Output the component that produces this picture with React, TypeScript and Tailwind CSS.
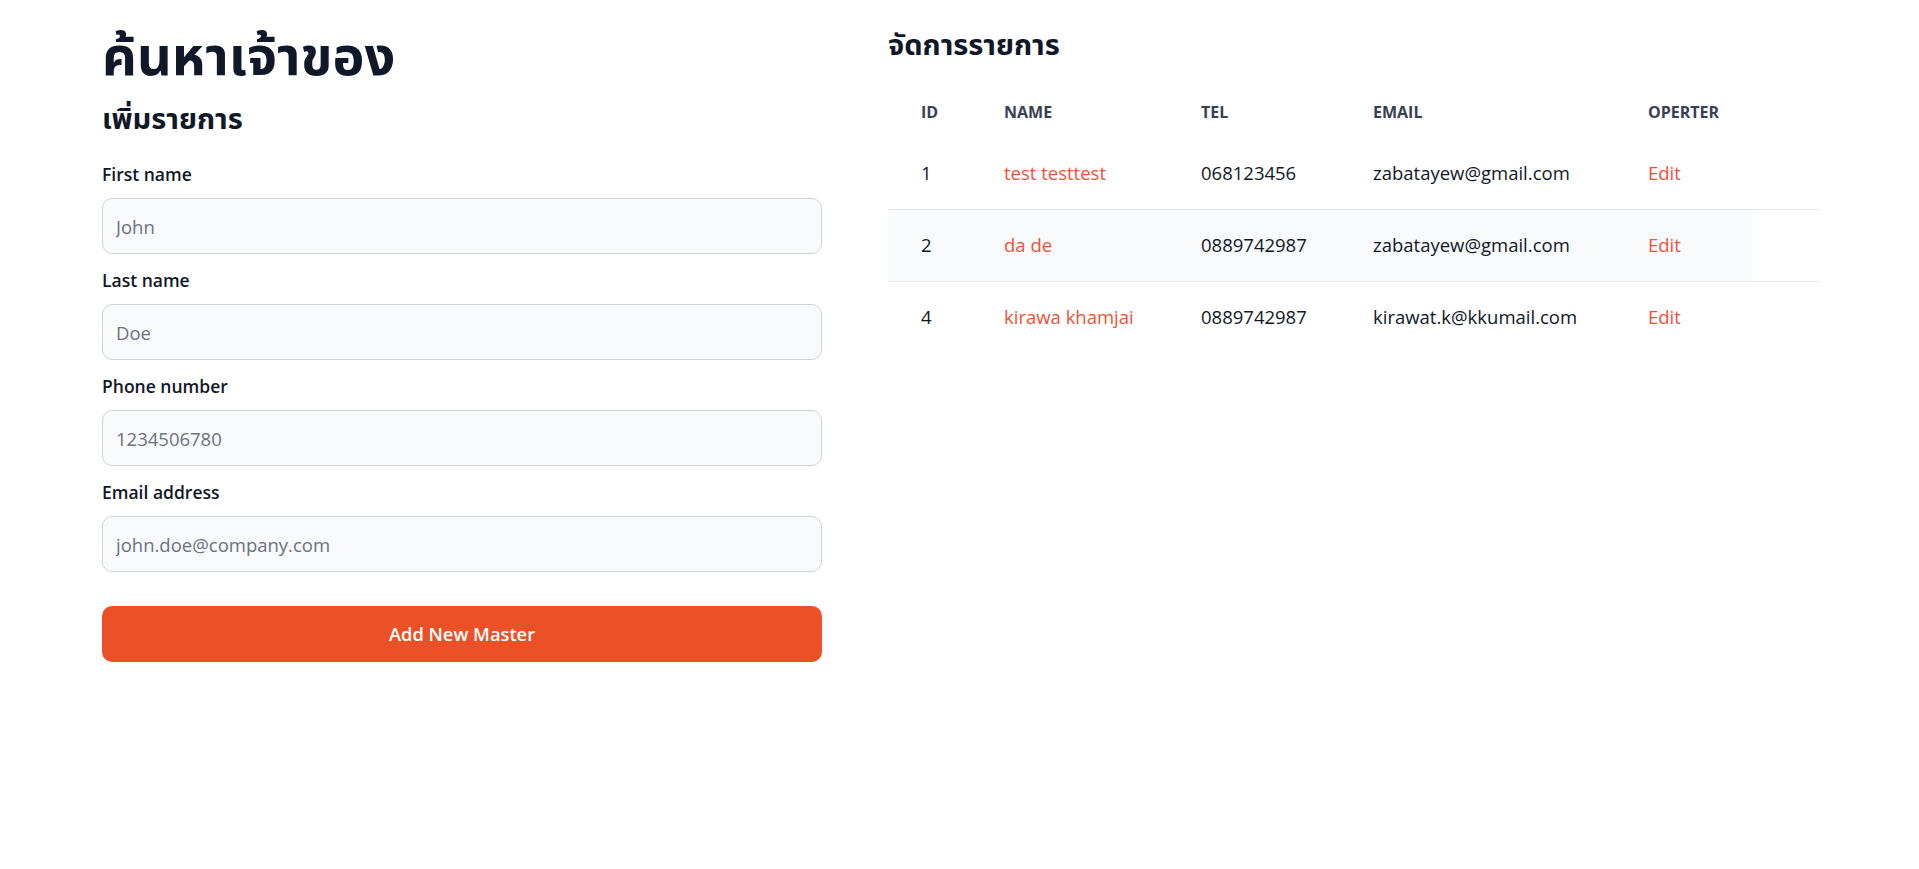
import React from "react";

const rows = [
  { id: "1", name: "test testtest", tel: "068123456", email: "zabatayew@gmail.com" },
  { id: "2", name: "da de", tel: "0889742987", email: "zabatayew@gmail.com" },
  { id: "4", name: "kirawa khamjai", tel: "0889742987", email: "kirawat.k@kkumail.com" },
];

const fields = [
  { label: "First name", ph: "John", type: "text" },
  { label: "Last name", ph: "Doe", type: "text" },
  { label: "Phone number", ph: "1234506780", type: "tel" },
  { label: "Email address", ph: "john.doe@company.com", type: "email" },
];

export default function App() {
  return (
    <div
      className="min-h-[869px] w-full bg-white text-[#111827]"
      style={{ fontFamily: '"Open Sans", "Noto Sans", "Noto Sans Thai", "Leelawadee UI", Tahoma, sans-serif' }}
    >
      <div className="grid grid-cols-[720px_931px] gap-x-[66px] pl-[102px] pt-[22px]">
        <div>
          <h1 className="text-[54px] font-bold leading-[64px] text-[#111827]">ค้นหาเจ้าของ</h1>
          <h2 className="mt-[14px] text-[29px] font-bold leading-[36px] text-[#111827]">เพิ่มรายการ</h2>
          <form className="mt-[25px] flex flex-col gap-[13px]">
            {fields.map((f) => (
              <div key={f.label} className="flex flex-col gap-[11px]">
                <label className="text-[17.5px] font-semibold leading-[26px] text-[#111827]">{f.label}</label>
                <input
                  type={f.type}
                  placeholder={f.ph}
                  className="h-[56px] w-full rounded-[10px] border border-[#d1d5db] bg-[#f9fafb] px-[13px] text-[18.5px] text-[#111827] placeholder:text-[#6b7280] outline-none"
                />
              </div>
            ))}
            <button
              type="button"
              className="mt-[21px] h-[56px] w-full rounded-[10px] bg-[#eb5027] text-[18.3px] font-semibold text-white"
            >
              Add New Master
            </button>
          </form>
        </div>
        <div className="pt-[4px]">
          <h2 className="text-[29px] font-bold leading-[36px] text-[#111827]">จัดการรายการ</h2>
          <table className="mt-[24px] w-full border-collapse text-left">
            <thead>
              <tr className="h-[51px] text-[16px] font-bold uppercase text-[#374151]">
                <th className="w-[83px] pl-[33px]">ID</th>
                <th className="w-[197px] pl-[33px]">NAME</th>
                <th className="w-[172px] pl-[33px]">TEL</th>
                <th className="w-[275px] pl-[33px]">EMAIL</th>
                <th className="w-[137px] pl-[33px]">OPERTER</th>
                <th></th>
              </tr>
            </thead>
            <tbody className="text-[18.5px] font-medium">
              {rows.map((r, i) => {
                const bg = i === 1 ? "bg-[#f9fafb]" : "";
                return (
                  <tr key={r.id} className={i < rows.length - 1 ? "h-[72px] border-b border-[#e5e7eb]" : "h-[72px]"}>
                    <td className={`pl-[33px] text-[#111827] ${bg}`}>{r.id}</td>
                    <td className={`pl-[33px] text-[#f05237] ${bg}`}>{r.name}</td>
                    <td className={`pl-[33px] text-[#111827] ${bg}`}>{r.tel}</td>
                    <td className={`pl-[33px] text-[#111827] ${bg}`}>{r.email}</td>
                    <td className={`pl-[33px] ${bg}`}>
                      <a className="text-[#f05237] font-medium">Edit</a>
                    </td>
                    <td></td>
                  </tr>
                );
              })}
            </tbody>
          </table>
        </div>
      </div>
    </div>
  );
}
